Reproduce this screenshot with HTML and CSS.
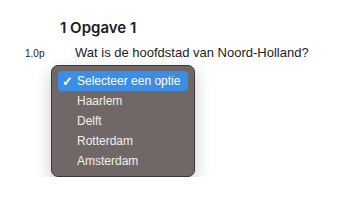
FILE: index.html
```html
<!DOCTYPE html>
<html lang="nl">
  <head>
    <meta charset="UTF-8" />
    <title>Opgave 1</title>
    <link rel="stylesheet" href="styles.css">
  </head>
  <body>
    <h2 class="title">1 Opgave 1</h2>

    <div class="question">
      <span class="points">1.0p</span>
      <span class="text">Wat is de hoofdstad van Noord-Holland?</span>
    </div>

    <div class="menu">
      <div class="option selected"><span class="check">✓</span>Selecteer een optie</div>
      <div class="option"><span class="check"></span>Haarlem</div>
      <div class="option"><span class="check"></span>Delft</div>
      <div class="option"><span class="check"></span>Rotterdam</div>
      <div class="option"><span class="check"></span>Amsterdam</div>
    </div>
  </body>
</html>
```

FILE: styles.css
```css
body {
  margin: 0;
  background: #fff;
  color: #222;
  font-family: "Liberation Sans", Arial, sans-serif;
}

.title {
  font-family: Inter, "Noto Sans", sans-serif;
  font-weight: 600;
  font-size: 15px;
  line-height: 20px;
  margin: 18px 0 0 60px;
  color: #1c1c1c;
}

.question {
  display: flex;
  align-items: baseline;
  margin-top: 6px;
  line-height: 18px;
}

.points {
  font-size: 10px;
  width: 75px;
  padding-left: 25px;
  box-sizing: border-box;
}

.text {
  font-size: 13px;
}

.menu {
  width: 144px;
  margin: 2px 0 0 51px;
  padding: 5px 6px;
  box-sizing: border-box;
  background: #6f6866;
  border: 1px solid #3b3938;
  border-radius: 7px;
  box-shadow: 0 6px 16px rgba(0, 0, 0, 0.22);
}

.option {
  display: flex;
  align-items: center;
  height: 20px;
  font-size: 12px;
  color: #f2f0ef;
  border-radius: 4px;
  padding-left: 4px;
}

.option.selected {
  background: #3b8ee8;
  color: #fff;
}

.check {
  width: 15px;
  font-size: 13px;
  font-weight: bold;
}
```
